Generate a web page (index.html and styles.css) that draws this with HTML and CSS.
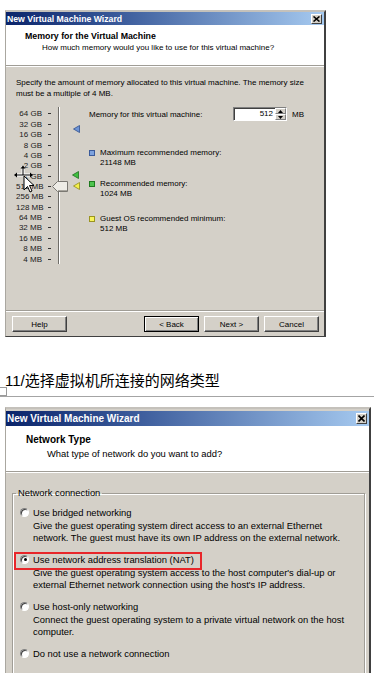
FILE: index.html
```html
<!DOCTYPE html>
<html>
<head>
<meta charset="utf-8">
<link rel="stylesheet" href="styles.css">
</head>
<body>
<div class="page">
  <div class="dlg dlg1">
    <div class="titlebar">
      <span class="ttl">New Virtual Machine Wizard</span>
      <span class="close"><svg width="7" height="6" viewBox="0 0 7 6"><path d="M0.5 0.5L6.5 5.5M6.5 0.5L0.5 5.5" stroke="#000" stroke-width="1.6"/></svg></span>
    </div>
    <div class="hdr">
      <div class="h-title">Memory for the Virtual Machine</div>
      <div class="h-sub">How much memory would you like to use for this virtual machine?</div>
    </div>
    <div class="body1">
      <p class="intro">Specify the amount of memory allocated to this virtual machine. The memory size<br>must be a multiple of 4 MB.</p>
      <div class="mem">
        <div class="scale">
          <div class="labels">
            <div class="row"><span class="lbl">64 GB</span><i class="tick"></i></div>
            <div class="row"><span class="lbl">32 GB</span><i class="tick"></i></div>
            <div class="row"><span class="lbl">16 GB</span><i class="tick"></i></div>
            <div class="row"><span class="lbl">8 GB</span><i class="tick"></i></div>
            <div class="row"><span class="lbl">4 GB</span><i class="tick"></i></div>
            <div class="row"><span class="lbl">2 GB</span><i class="tick"></i></div>
            <div class="row"><span class="lbl">1 GB</span><i class="tick"></i></div>
            <div class="row"><span class="lbl">512 MB</span><i class="tick"></i></div>
            <div class="row"><span class="lbl">256 MB</span><i class="tick"></i></div>
            <div class="row"><span class="lbl">128 MB</span><i class="tick"></i></div>
            <div class="row"><span class="lbl">64 MB</span><i class="tick"></i></div>
            <div class="row"><span class="lbl">32 MB</span><i class="tick"></i></div>
            <div class="row"><span class="lbl">16 MB</span><i class="tick"></i></div>
            <div class="row"><span class="lbl">8 MB</span><i class="tick"></i></div>
            <div class="row"><span class="lbl">4 MB</span><i class="tick"></i></div>
          </div>
          <div class="track"></div>
          <svg class="thumb" width="16" height="11" viewBox="0 0 16 11"><polygon points="0.5,5.5 5.5,0.5 15.5,0.5 15.5,10.5 5.5,10.5" fill="#eeece6" stroke="#7a7872"/><path d="M6 9.5H15" stroke="#a8a59e"/></svg>
          <svg class="mk mk-blue" width="7" height="8" viewBox="0 0 7 8"><polygon points="0.5,4 6.5,0.5 6.5,7.5" fill="#6f95d6" stroke="#2f4f8f" stroke-width="0.8"/></svg>
          <svg class="mk mk-green" width="7" height="8" viewBox="0 0 7 8"><polygon points="0.5,4 6.5,0.5 6.5,7.5" fill="#3fbf3f" stroke="#1f6f1f" stroke-width="0.8"/></svg>
          <svg class="mk mk-yellow" width="7" height="8" viewBox="0 0 7 8"><polygon points="0.5,4 6.5,0.5 6.5,7.5" fill="#f4f04a" stroke="#8f8a1f" stroke-width="0.8"/></svg>
          <svg class="cursor" width="24" height="30" viewBox="0 0 24 30">
            <g stroke="#fff" stroke-width="3" fill="none"><path d="M2 10H19M10 1V10"/></g>
            <g stroke="#000" stroke-width="1" fill="none"><path d="M3 10H18M10 2V10"/></g>
            <polygon points="1,10 4,7.5 4,12.5" fill="#000"/>
            <polygon points="20,10 17,7.5 17,12.5" fill="#000"/>
            <polygon points="10,0.5 7.5,3.5 12.5,3.5" fill="#000"/>
            <polygon points="11,11 11,25 14.5,21.5 17,27 19,26 16.5,20.5 21,20.5" fill="#fff" stroke="#000" stroke-width="1" stroke-linejoin="round"/>
          </svg>
        </div>
        <div class="info">
          <div class="amount">
            <span class="amount-lbl">Memory for this virtual machine:</span>
            <span class="spin">
              <span class="spin-val">512</span>
              <span class="spin-btns"><i class="sb"><svg width="5" height="3" viewBox="0 0 5 3"><polygon points="2.5,0 5,3 0,3" fill="#000"/></svg></i><i class="sb"><svg width="5" height="3" viewBox="0 0 5 3"><polygon points="0,0 5,0 2.5,3" fill="#000"/></svg></i></span>
            </span>
            <span class="unit">MB</span>
          </div>
          <div class="legend lg1"><span class="sq sq-blue"></span><div>Maximum recommended memory:<br>21148 MB</div></div>
          <div class="legend lg2"><span class="sq sq-green"></span><div>Recommended memory:<br>1024 MB</div></div>
          <div class="legend lg3"><span class="sq sq-yellow"></span><div>Guest OS recommended minimum:<br>512 MB</div></div>
        </div>
      </div>
    </div>
    <div class="footer">
      <span class="btn">Help</span>
      <span class="btn btn-def btn-back">&lt; Back</span>
      <span class="btn">Next &gt;</span>
      <span class="btn">Cancel</span>
    </div>
  </div>

  <div class="caption">11/选择虚拟机所连接的网络类型</div>
  <div class="rule"><span class="anchor"></span></div>

  <div class="dlg dlg2">
    <div class="titlebar tb2">
      <span class="ttl">New Virtual Machine Wizard</span>
      <span class="close close2"><svg width="7" height="7" viewBox="0 0 7 7"><path d="M0.5 0.5L6.5 6.5M6.5 0.5L0.5 6.5" stroke="#000" stroke-width="1.6"/></svg></span>
    </div>
    <div class="hdr hdr2">
      <div class="h-title">Network Type</div>
      <div class="h-sub">What type of network do you want to add?</div>
    </div>
    <div class="body2">
      <fieldset class="group">
        <legend>Network connection</legend>
        <div class="opt">
          <div class="opt-row"><span class="radio"></span>Use bridged networking</div>
          <div class="desc">Give the guest operating system direct access to an external Ethernet<br>network. The guest must have its own IP address on the external network.</div>
        </div>
        <div class="opt opt-sel">
          <div class="opt-row"><span class="radio on"></span>Use network address translation (NAT)</div>
          <div class="desc">Give the guest operating system access to the host computer's dial-up or<br>external Ethernet network connection using the host's IP address.</div>
          <span class="hilite"></span>
        </div>
        <div class="opt">
          <div class="opt-row"><span class="radio"></span>Use host-only networking</div>
          <div class="desc">Connect the guest operating system to a private virtual network on the host<br>computer.</div>
        </div>
        <div class="opt">
          <div class="opt-row"><span class="radio"></span>Do not use a network connection</div>
        </div>
      </fieldset>
    </div>
  </div>
</div>
</body>
</html>
```
FILE: styles.css
```css
* { box-sizing: border-box; margin: 0; padding: 0; }
html, body { background: #fff; }
body {
  width: 374px;
  height: 673px;
  overflow: hidden;
  font-family: "Liberation Sans", Arial, sans-serif;
  color: #000;
}
.page { padding-top: 10px; }

.dlg {
  margin-left: 5px;
  background: #d4d0c8;
  border-top: 2px solid #c4c1bb;
  border-left: 1px solid #aaa7a0;
  border-right: 2px solid #404040;
  border-bottom: 1px solid #404040;
}
.dlg1 { width: 321px; font-size: 8px; }

.titlebar {
  height: 13px;
  display: flex;
  align-items: center;
  background: linear-gradient(to right, #0a246a 0%, #3a5a9a 35%, #a6caf0 100%);
}
.ttl {
  color: #fff;
  font-weight: bold;
  font-size: 8.7px;
  margin-left: 1px;
  white-space: nowrap;
}
.close {
  margin-left: auto;
  margin-right: 2px;
  width: 11px;
  height: 10px;
  background: #d4d0c8;
  border: 1px solid;
  border-color: #fff #404040 #404040 #fff;
  display: flex;
  align-items: center;
  justify-content: center;
}

.hdr {
  height: 41px;
  background: #fff;
  border-bottom: 1px solid #a09d96;
}
.h-title {
  font-weight: bold;
  font-size: 8.8px;
  line-height: 11px;
  padding: 5.5px 0 0 19px;
}
.h-sub {
  line-height: 11px;
  padding-left: 36px;
}

.body1 {
  height: 244px;
  border-top: 1px solid #fff;
  padding: 11px 0 0 10px;
}
.intro { line-height: 10.5px; white-space: nowrap; }

.mem { display: flex; margin-top: 8px; }
.scale { position: relative; width: 73px; height: 158px; }
.labels { padding-top: 1.8px; }
.row { height: 10.36px; display: flex; align-items: center; }
.lbl { width: 26px; text-align: right; white-space: nowrap; color: #1a1a1a; }
.tick { width: 3px; height: 1px; background: #333; margin-left: 6px; }
.track {
  position: absolute;
  left: 42px; top: 0;
  width: 2px; height: 157px;
  border-left: 1px solid #6f6d68;
  border-right: 1px solid #fff;
}
.thumb { position: absolute; left: 36px; top: 74px; }
.mk { position: absolute; }
.mk-blue { left: 57px; top: 18px; }
.mk-green { left: 56px; top: 64px; }
.mk-yellow { left: 57px; top: 75px; }
.cursor { position: absolute; left: -3px; top: 58px; }

.info { width: 215px; }
.amount { height: 14px; display: flex; align-items: center; }
.amount-lbl { flex: 1; white-space: nowrap; }
.spin {
  width: 54px;
  height: 14px;
  display: flex;
  background: #fff;
  border: 1px solid;
  border-color: #808080 #fff #fff #808080;
  box-shadow: inset 1px 1px 0 #404040;
}
.spin-val { flex: 1; text-align: right; padding-right: 2px; line-height: 12px; }
.spin-btns { width: 11px; display: flex; flex-direction: column; }
.sb {
  flex: 1;
  background: #d4d0c8;
  border: 1px solid;
  border-color: #fff #808080 #808080 #fff;
  display: flex; align-items: center; justify-content: center;
}
.unit { margin-left: 5px; }

.legend { display: flex; line-height: 9.5px; white-space: nowrap; }
.lg1 { margin-top: 27.25px; }
.lg2 { margin-top: 12px; }
.lg3 { margin-top: 16px; }
.sq { width: 6px; height: 6px; margin-top: 1.75px; margin-right: 5px; border: 1px solid; flex: none; }
.sq-blue { background: #7da2de; border-color: #3a5a9a; }
.sq-green { background: #4ec44e; border-color: #1f7a1f; }
.sq-yellow { background: #f8f45c; border-color: #9a9420; }

.footer {
  border-top: 1px solid #a09d96;
  box-shadow: inset 0 1px 0 #fff;
  padding: 5px 5px 4px 6px;
  display: flex;
  gap: 5px;
}
.btn {
  width: 55px;
  height: 16px;
  display: flex; align-items: center; justify-content: center;
  border: 1px solid;
  border-color: #fff #404040 #404040 #fff;
  box-shadow: inset -1px -1px 0 #808080;
}
.btn-back { margin-left: auto; }
.btn-def { border-color: #000; box-shadow: inset 1px 1px 0 #fff, inset -1px -1px 0 #808080; }

.caption {
  margin-top: 34px;
  margin-left: 5px;
  font-family: "Liberation Sans", "Noto Sans CJK SC", sans-serif;
  font-size: 15px;
  line-height: 20px;
  white-space: nowrap;
}
.rule {
  position: relative;
  height: 6px;
  border-bottom: 1px solid #a4a4a4;
}
.anchor {
  position: absolute;
  left: 0; top: -4px;
  width: 7px; height: 9px;
  border: 1px solid #9a9a9a;
  border-left: none;
}

.dlg2 {
  width: 366px;
  margin-top: 10px;
  font-size: 9.4px;
  border-top-width: 2px;
  padding-top: 2px;
}
.tb2 { height: 15px; }
.tb2 .ttl { font-size: 10px; }
.close2 { height: 11px; }
.hdr2 { height: 46px; }
.hdr2 .h-title { font-size: 10px; line-height: 12px; padding: 8px 0 0 20px; }
.hdr2 .h-sub { line-height: 12px; padding-left: 41px; margin-top: 2px; }

.body2 {
  height: 210px;
  border-top: 1px solid #fff;
  padding-top: 15px;
}
.group {
  margin: 0 4px 0 6px;
  border: 1px solid #a09d96;
  box-shadow: inset 1px 1px 0 #fff, 1px 1px 0 #fff;
  padding: 8px 0 8px 0;
  min-width: 0;
}
.group legend {
  margin-left: 3px;
  padding: 0 2px;
  line-height: 10px;
}
.opt { position: relative; margin-bottom: 10px; white-space: nowrap; }
.opt-row { height: 12px; display: flex; align-items: center; }
.radio {
  width: 9px; height: 9px;
  margin: 0 4px 0 7px;
  border-radius: 50%;
  background: #fff;
  border: 1px solid;
  border-color: #808080 #fff #fff #808080;
  box-shadow: inset 1px 1px 0 #404040;
  position: relative;
  flex: none;
}
.radio.on::after {
  content: "";
  position: absolute;
  left: 2.5px; top: 2.5px;
  width: 3px; height: 3px;
  border-radius: 50%;
  background: #000;
}
.desc { padding: 2px 0 0 20px; line-height: 11.5px; }
.hilite {
  position: absolute;
  left: 1px; top: -1px;
  width: 188px; height: 18px;
  border: 2px solid #e8262a;
}
```
